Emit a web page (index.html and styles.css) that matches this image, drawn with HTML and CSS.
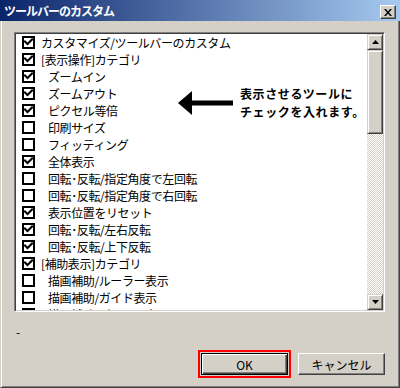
FILE: index.html
```html
<!DOCTYPE html>
<html lang="ja">
<head>
    <meta charset="UTF-8">
    <title>ツールバーのカスタム</title>
    <link rel="stylesheet" href="styles.css">
</head>
<body>
    <svg class="defs" width="0" height="0">
        <symbol id="tick" viewBox="0 0 9 9">
            <path d="M1 3.5 L3.5 6 L8 1.5" fill="none" stroke="#000" stroke-width="2" stroke-linecap="square"/>
        </symbol>
    </svg>

    <div class="titlebar">
        <span class="title">ツールバーのカスタム</span>
        <div class="close">
            <svg width="8" height="7" viewBox="0 0 8 7"><path d="M0 0h2l2 2.5l2-2.5h2l-3 3.5l3 3.5h-2l-2-2.5l-2 2.5h-2l3-3.5z" fill="#000"/></svg>
        </div>
    </div>

    <div class="dialog">
        <div class="listbox">
            <ul class="items">
                <li class="item"><span class="check"><svg><use href="#tick"/></svg></span>カスタマイズ/ツールバーのカスタム</li>
                <li class="item"><span class="check"><svg><use href="#tick"/></svg></span>[表示操作]カテゴリ</li>
                <li class="item sub"><span class="check"><svg><use href="#tick"/></svg></span>ズームイン</li>
                <li class="item sub"><span class="check"><svg><use href="#tick"/></svg></span>ズームアウト</li>
                <li class="item sub"><span class="check"><svg><use href="#tick"/></svg></span>ピクセル等倍</li>
                <li class="item sub"><span class="check"></span>印刷サイズ</li>
                <li class="item sub"><span class="check"></span>フィッティング</li>
                <li class="item sub"><span class="check"><svg><use href="#tick"/></svg></span>全体表示</li>
                <li class="item sub"><span class="check"></span>回転･反転/指定角度で左回転</li>
                <li class="item sub"><span class="check"></span>回転･反転/指定角度で右回転</li>
                <li class="item sub"><span class="check"><svg><use href="#tick"/></svg></span>表示位置をリセット</li>
                <li class="item sub"><span class="check"><svg><use href="#tick"/></svg></span>回転･反転/左右反転</li>
                <li class="item sub"><span class="check"><svg><use href="#tick"/></svg></span>回転･反転/上下反転</li>
                <li class="item"><span class="check"><svg><use href="#tick"/></svg></span>[補助表示]カテゴリ</li>
                <li class="item sub"><span class="check"></span>描画補助/ルーラー表示</li>
                <li class="item sub"><span class="check"></span>描画補助/ガイド表示</li>
                <li class="item sub"><span class="check"></span>描画補助/グリッド表示</li>
            </ul>

            <div class="scrollbar">
                <div class="sb-btn">
                    <svg width="7" height="4" viewBox="0 0 7 4"><path d="M3.5 0L7 4H0z" fill="#000"/></svg>
                </div>
                <div class="sb-thumb"></div>
                <div class="sb-track"></div>
                <div class="sb-btn">
                    <svg width="7" height="4" viewBox="0 0 7 4"><path d="M0 0h7L3.5 4z" fill="#000"/></svg>
                </div>
            </div>

            <!-- annotation over the list -->
            <svg class="note-arrow" width="56" height="25" viewBox="0 0 56 25">
                <path d="M0 12 L14 0 L14 9.5 L55 9.5 L55 14.5 L14 14.5 L14 24 Z" fill="#000"/>
            </svg>
            <div class="note-text">表示させるツールに<br>チェックを入れます。</div>
        </div>

        <div class="status">-</div>

        <div class="buttons">
            <button class="btn default">OK</button>
            <button class="btn">キャンセル</button>
        </div>
    </div>
</body>
</html>
```

FILE: styles.css
```css
body {
    margin: 0;
    width: 400px;
    height: 388px;
    overflow: hidden;
    background-color: #D4D0C8;
    font-family: "Noto Sans CJK JP", sans-serif;
    font-size: 12px;
    color: #000;
}
.defs {
    position: absolute;
}


.titlebar {
    display: flex;
    justify-content: space-between;
    align-items: flex-start;
    height: 21px;
    padding: 0 4px 0 4px;
    background: linear-gradient(to right, #0A246A, #A6CAF0);
}
.title {
    color: #fff;
    font-weight: bold;
    font-size: 12px;
    letter-spacing: -1px;
    line-height: 21px;
}
.close {
    display: flex;
    justify-content: center;
    align-items: center;
    box-sizing: border-box;
    width: 16px;
    height: 14px;
    margin-top: 5px;
    background-color: #D4D0C8;
    border: 1px solid;
    border-color: #fff #404040 #404040 #fff;
    box-shadow: inset -1px -1px #808080;
}


.dialog {
    box-sizing: border-box;
    height: 367px;
    padding: 11px 14px 0 13px;
    border: 1px solid;
    border-top: none;
    border-color: #D4D0C8 #404040 #404040 #D4D0C8;
    box-shadow: inset 1px 0 #fff, inset -1px -1px #808080;
}


.listbox {
    position: relative;
    display: flex;
    box-sizing: border-box;
    height: 280px;
    background-color: #fff;
    border: 1px solid;
    border-color: #808080 #fff #fff #808080;
    box-shadow: inset 1px 1px #404040, inset -1px -1px #D4D0C8;
    padding: 1px;
}
.items {
    flex: 1;
    margin: 0;
    padding: 0;
    list-style: none;
    overflow: hidden;
}
.item {
    display: flex;
    align-items: center;
    height: 17px;
    padding-left: 6px;
    white-space: nowrap;
    letter-spacing: -0.4px;
}
.item.sub {
    padding-left: 6px;
    text-indent: 0;
}
.item.sub .check {
    margin-right: 13px;
}
.check {
    display: flex;
    justify-content: center;
    align-items: center;
    box-sizing: border-box;
    flex: none;
    width: 13px;
    height: 13px;
    margin-right: 6px;
    border: 2px solid #000;
    background-color: #fff;
}
.check svg {
    width: 9px;
    height: 9px;
}


.scrollbar {
    display: flex;
    flex-direction: column;
    width: 16px;
}
.sb-btn, .sb-thumb {
    display: flex;
    justify-content: center;
    align-items: center;
    box-sizing: border-box;
    background-color: #D4D0C8;
    border: 1px solid;
    border-color: #D4D0C8 #404040 #404040 #D4D0C8;
    box-shadow: inset 1px 1px #fff, inset -1px -1px #808080;
}
.sb-btn {
    height: 16px;
}
.sb-thumb {
    height: 84px;
}
.sb-track {
    flex: 1;
    background: repeating-conic-gradient(#fff 0 25%, #D4D0C8 0 50%) 0 0 / 2px 2px;
}


.note-arrow {
    position: absolute;
    left: 163px;
    top: 58px;
}
.note-text {
    position: absolute;
    left: 225px;
    top: 52px;
    font-weight: bold;
    font-size: 12px;
    line-height: 18px;
    letter-spacing: 0.6px;
    white-space: nowrap;
}


.status {
    height: 12px;
    margin-top: 14px;
    padding-left: 2px;
    line-height: 12px;
}


.buttons {
    display: flex;
    justify-content: flex-end;
    gap: 10px;
    margin-top: 15px;
}
.btn {
    box-sizing: border-box;
    width: 87px;
    height: 22px;
    padding: 0;
    font-family: "Noto Sans CJK JP", sans-serif;
    font-size: 12px;
    color: #000;
    background-color: #D4D0C8;
    border: 1px solid;
    border-color: #fff #404040 #404040 #fff;
    box-shadow: inset -1px -1px #808080;
}
.btn.default {
    border-color: #000;
    box-shadow: inset 1px 1px #fff, inset -1px -1px #404040, inset -2px -2px #808080;
    outline: 2px solid #f00;
    outline-offset: 1px;
}
```
